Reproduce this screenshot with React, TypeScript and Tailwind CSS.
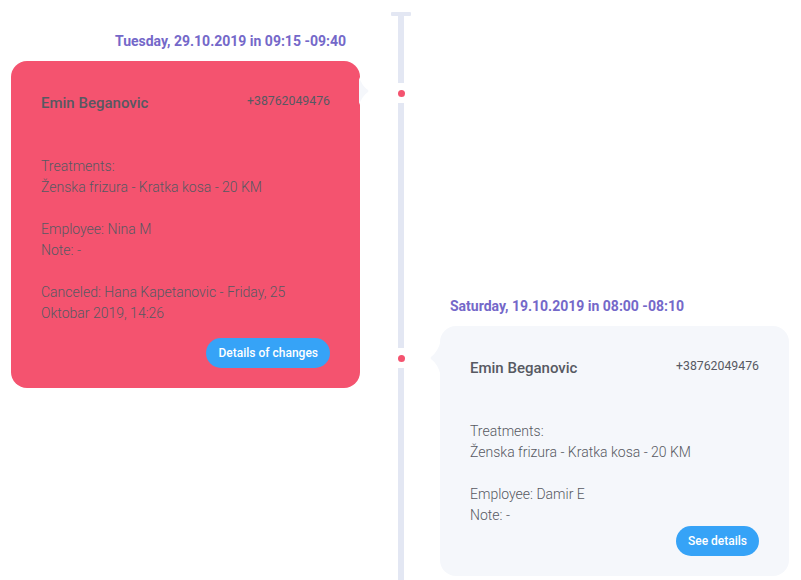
type Appt = {
    date: string;
    name: string;
    phone: string;
    treatment: string;
    employee: string;
    canceled?: string[];
    button: string;
};

const first: Appt = {
    date: 'Tuesday, 29.10.2019 in 09:15 -09:40',
    name: 'Emin Beganovic',
    phone: '+38762049476',
    treatment: 'Ženska frizura - Kratka kosa - 20 KM',
    employee: 'Nina M',
    canceled: ['Canceled: Hana Kapetanovic - Friday, 25', 'Oktobar 2019, 14:26'],
    button: 'Details of changes',
};

const second: Appt = {
    date: 'Saturday, 19.10.2019 in 08:00 -08:10',
    name: 'Emin Beganovic',
    phone: '+38762049476',
    treatment: 'Ženska frizura - Kratka kosa - 20 KM',
    employee: 'Damir E',
    button: 'See details',
};

function Tail({ side }: { side: 'left' | 'right' }) {
    // speech-bubble tail pointing towards the timeline
    if (side === 'right') {
        return (
            <svg className="absolute -right-[9px] top-[16px]" width="10" height="28" viewBox="0 0 10 28">
                <path d="M0 0 Q3 9 9 13 Q10 14 9 15 Q3 19 0 28 Z" fill="#f5f7fb" />
            </svg>
        );
    }
    return (
        <svg className="absolute -left-[10px] top-[14px]" width="11" height="36" viewBox="0 0 11 36">
            <path d="M11 0 Q8 12 1 17 Q0 18 1 19 Q8 24 11 36 Z" fill="#f5f7fb" />
        </svg>
    );
}

function Card({ a, red, side }: { a: Appt; red?: boolean; side: 'left' | 'right' }) {
    return (
        <div
            className={`relative w-[349px] rounded-[16px] pl-[30px] pr-[30px] pt-[31px] pb-[20px] ${red ? 'bg-[#f4536f]' : 'bg-[#f5f7fb]'}`}
        >
            <Tail side={side} />
            <div className="flex items-start justify-between">
                <div className="text-[15px] font-medium leading-[22px] text-[#575962]">{a.name}</div>
                <div className="pt-[1px] text-[12.3px] leading-[16px] text-[#575962]">{a.phone}</div>
            </div>
            <div className="mt-[42px] text-[14px] font-light leading-[21px] text-[#575962]">
                <div>Treatments:</div>
                <div>{a.treatment}</div>
                <div className="mt-[21px]">Employee: {a.employee}</div>
                <div>Note: -</div>
                {a.canceled && (
                    <div className="mt-[21px]">
                        {a.canceled.map((l) => (
                            <div key={l}>{l}</div>
                        ))}
                    </div>
                )}
            </div>
            <div className={`flex justify-end ${a.canceled ? 'mt-[14px]' : 'mt-0'}`}>
                <button className="h-[30px] rounded-full bg-[#36a3f7] px-[12px] text-[12px] font-medium text-white">
                    {a.button}
                </button>
            </div>
        </div>
    );
}

function Dot() {
    return (
        <div className="flex h-[20px] w-[6px] items-center justify-center">
            <div className="h-[7px] w-[7px] shrink-0 rounded-full bg-[#f4536f]" />
        </div>
    );
}

export default function App() {
    return (
        <div className="flex h-[580px] w-[801px] overflow-hidden bg-white" style={{ fontFamily: 'Roboto, "Noto Sans", sans-serif' }}>

            {/* left column */}
            <div className="w-[398px] shrink-0 pl-[11px] pt-[31px]">
                <div className="w-[349px] pr-[14px] text-right text-[14px] font-bold leading-[20px] text-[#7468c9]">
                    {first.date}
                </div>
                <div className="mt-[10px]">
                    <Card a={first} red side="right" />
                </div>
            </div>

            {/* timeline */}
            <div className="relative flex w-[6px] shrink-0 flex-col items-center pt-[12px]">
                <div className="h-[4px] w-[20px] shrink-0 rounded-[1px] bg-[#e3e7f3]" />
                <div className="h-[67px] w-[6px] shrink-0 bg-[#e3e7f3]" />
                <Dot />
                <div className="h-[245px] w-[6px] shrink-0 bg-[#e3e7f3]" />
                <Dot />
                <div className="w-[6px] flex-1 bg-[#e3e7f3]" />
            </div>

            {/* right column */}
            <div className="flex-1 pl-[36px] pt-[296px]">
                <div className="pl-[10px] text-[14px] font-bold leading-[20px] text-[#7468c9]">{second.date}</div>
                <div className="mt-[10px]">
                    <Card a={second} side="left" />
                </div>
            </div>

        </div>
    );
}
